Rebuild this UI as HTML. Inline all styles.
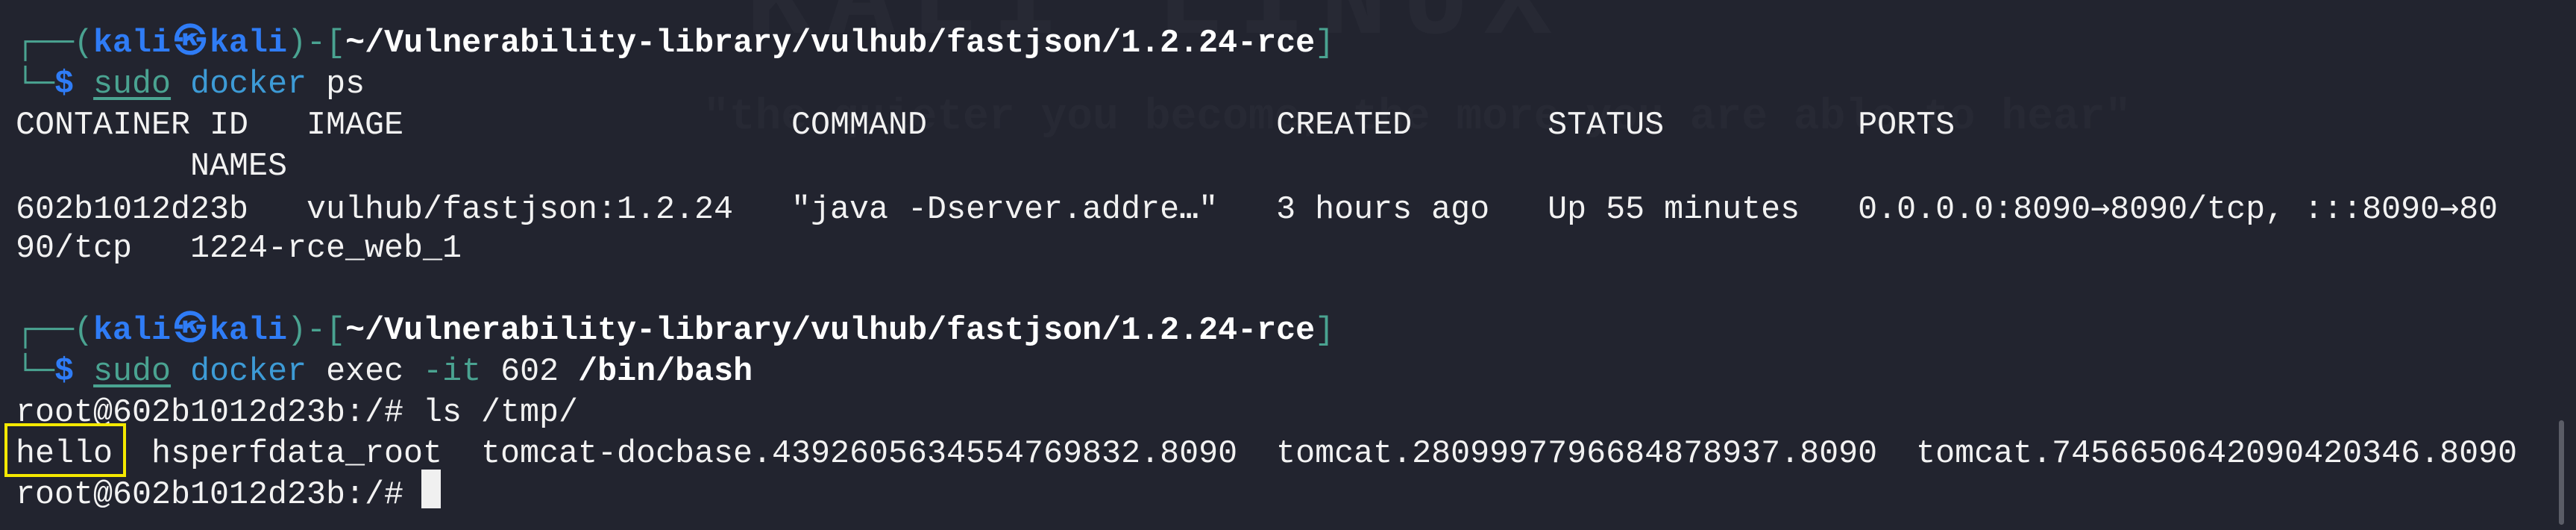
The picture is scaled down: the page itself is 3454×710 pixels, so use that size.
<!DOCTYPE html>
<html><head><meta charset="utf-8"><style>
html,body{margin:0;padding:0;background:#22242f;width:3454px;height:710px;overflow:hidden;position:relative}
.l{position:absolute;left:21px;white-space:pre;font-family:"Liberation Mono","DejaVu Sans Mono",monospace;font-size:43.33px;line-height:55px;height:55px;color:#f2f2f2}
.t{color:#4aa391}.b{color:#2f7cf6;font-weight:bold}.w{font-weight:bold;color:#fff}
.u{text-decoration:underline;text-underline-offset:6px;color:#4aa391}.d{color:#3d9bd6}
.k{display:inline-block;width:52px;text-align:center;color:#2f7cf6;font-weight:bold}
.a{display:inline-block;width:26px;text-align:center;font-family:"DejaVu Sans Mono",monospace}
.wm{position:absolute;font-family:"Liberation Mono",monospace;font-weight:bold;color:#272934;white-space:pre}
</style></head><body>
<div class="wm" style="left:943px;top:128px;font-size:58px;line-height:60px">"the quieter you become, the more you are able to hear"</div>
<div class="wm" style="left:1000px;top:-70px;font-size:150px;line-height:150px;letter-spacing:20px">KALI LINUX</div>
<div style="position:absolute;left:3431px;top:563px;width:7px;height:140px;border-radius:4px;background:#5a5c66"></div>

<div class="l" style="top:31px"><span class="t">┌──(</span><span class="b">kali</span><span class="k">㉿</span><span class="b">kali</span><span class="t">)-[</span><span class="w">~/Vulnerability-library/vulhub/fastjson/1.2.24-rce</span><span class="t">]</span></div>
<div class="l" style="top:86px"><span class="t">└─</span><span class="b">$</span> <span class="u">sudo</span> <span class="d">docker</span> ps</div>
<div class="l" style="top:141px">CONTAINER ID   IMAGE                    COMMAND                  CREATED       STATUS          PORTS</div>
<div class="l" style="top:196px">         NAMES</div>
<div class="l" style="top:251px">602b1012d23b   vulhub/fastjson:1.2.24   "java -Dserver.addre<span class="a">…</span>"   3 hours ago   Up 55 minutes   0.0.0.0:8090<span class="a">→</span>8090/tcp, :::8090<span class="a">→</span>80</div>
<div class="l" style="top:306px">90/tcp   1224-rce_web_1</div>
<div class="l" style="top:416px"><span class="t">┌──(</span><span class="b">kali</span><span class="k">㉿</span><span class="b">kali</span><span class="t">)-[</span><span class="w">~/Vulnerability-library/vulhub/fastjson/1.2.24-rce</span><span class="t">]</span></div>
<div class="l" style="top:471px"><span class="t">└─</span><span class="b">$</span> <span class="u">sudo</span> <span class="d">docker</span> exec <span class="t">-it</span> 602 <span class="w">/bin/bash</span></div>
<div class="l" style="top:526px">root@602b1012d23b:/# ls /tmp/</div>
<div class="l" style="top:581px">hello  hsperfdata_root  tomcat-docbase.4392605634554769832.8090  tomcat.2809997796684878937.8090  tomcat.7456650642090420346.8090</div>
<div class="l" style="top:636px">root@602b1012d23b:/# </div>
<div style="position:absolute;left:565px;top:629px;width:26px;height:52px;background:#f0f0f0"></div>
<div style="position:absolute;left:6px;top:567px;width:155px;height:64px;border:4px solid #f5e900"></div>
</body></html>
